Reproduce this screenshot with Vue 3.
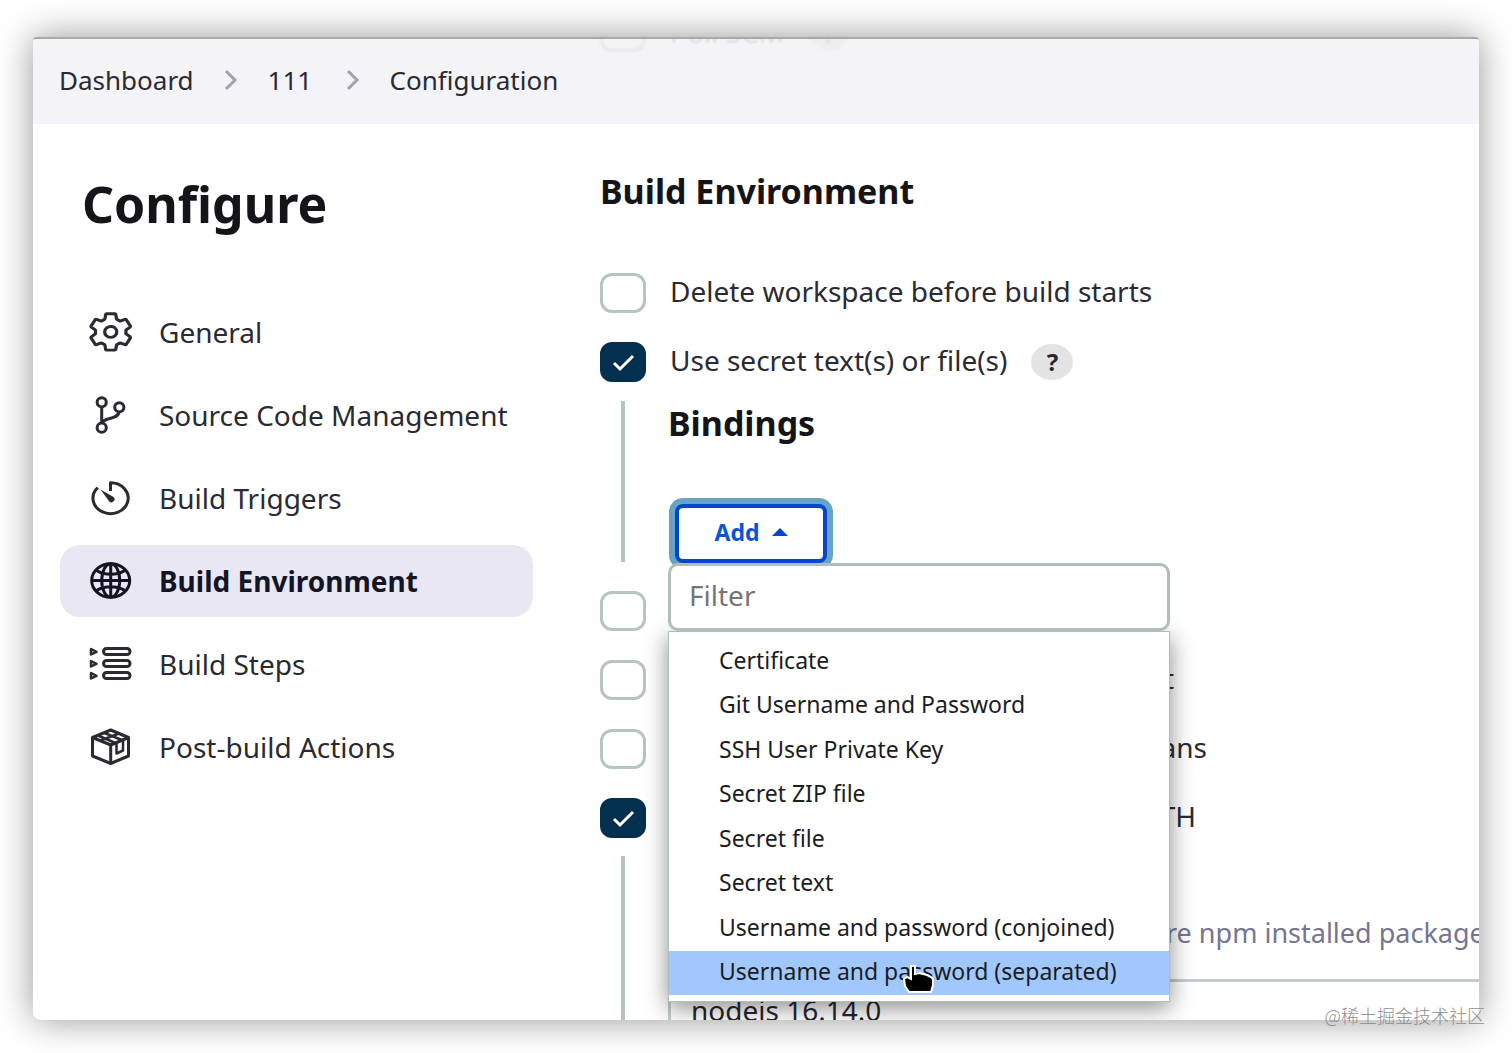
<script setup>
import { ref } from 'vue'

const filter = ref('')
const bindings = [
  'Certificate',
  'Git Username and Password',
  'SSH User Private Key',
  'Secret ZIP file',
  'Secret file',
  'Secret text',
  'Username and password (conjoined)',
  'Username and password (separated)',
]
const selected = 7

const sections = [
  { id: 'general', label: 'General' },
  { id: 'scm', label: 'Source Code Management' },
  { id: 'triggers', label: 'Build Triggers' },
  { id: 'environment', label: 'Build Environment' },
  { id: 'steps', label: 'Build Steps' },
  { id: 'post', label: 'Post-build Actions' },
]
const current = 'environment'

// The open menu covers these labels up to their last letters; width is the full label's extent.
const options = [
  { id: 'abort', label: '', width: 460, checked: false },
  { id: 'timestamps', label: 't', width: 504, checked: false },
  { id: 'inspect', label: 'ans', width: 537, checked: false },
  { id: 'node', label: 'TH', width: 526, checked: true },
]
</script>

<template>
  <div class="stage">
    <div class="window">
      <header class="topbar">
        <div class="ghost" aria-hidden="true">
          <span class="ghost-box"></span>
          <span>Poll SCM</span>
          <span class="ghost-help">?</span>
        </div>
        <nav class="crumbs" aria-label="Breadcrumb">
          <a href="#dashboard">Dashboard</a>
          <svg class="chevron" viewBox="0 0 14 22"><path d="M2 2l9 9-9 9" /></svg>
          <a href="#job">111</a>
          <svg class="chevron" viewBox="0 0 14 22"><path d="M2 2l9 9-9 9" /></svg>
          <a href="#configure">Configuration</a>
        </nav>
      </header>

      <div class="page">
        <aside class="sidebar">
          <h1>Configure</h1>
          <nav class="sections" aria-label="Sections">
            <a
              v-for="s in sections"
              :key="s.id"
              :href="'#' + s.id"
              class="section"
              :class="{ active: s.id === current }"
            >
              <svg v-if="s.id === 'general'" class="icon" viewBox="0 0 48 44">
                <g transform="translate(.4 .2) scale(.095 .085)">
                  <path stroke-width="34" d="M262.29 192.31a64 64 0 1057.4 57.4 64.13 64.13 0 00-57.4-57.4zM416.39 256a154.34 154.34 0 01-1.53 20.79l45.21 35.46a10.81 10.81 0 012.45 13.75l-42.77 74a10.81 10.81 0 01-13.14 4.59l-44.9-18.08a16.11 16.11 0 00-15.17 1.75A164.48 164.48 0 01325 400.8a15.94 15.94 0 00-8.82 12.14l-6.73 47.89a11.08 11.08 0 01-10.68 9.17h-85.54a11.11 11.11 0 01-10.69-8.87l-6.72-47.82a16.07 16.07 0 00-9-12.22 155.3 155.3 0 01-21.46-12.57 16 16 0 00-15.11-1.71l-44.89 18.07a10.81 10.81 0 01-13.14-4.58l-42.77-74a10.8 10.8 0 012.45-13.75l38.21-30a16.05 16.05 0 006-14.08c-.36-4.17-.58-8.33-.58-12.5s.21-8.27.58-12.35a16 16 0 00-6.07-13.94l-38.19-30A10.81 10.81 0 0149.48 186l42.77-74a10.81 10.81 0 0113.14-4.59l44.9 18.08a16.11 16.11 0 0015.17-1.75A164.48 164.48 0 01187 111.2a15.94 15.94 0 008.82-12.14l6.73-47.89A11.08 11.08 0 01213.23 42h85.54a11.11 11.11 0 0110.69 8.87l6.72 47.82a16.07 16.07 0 009 12.22 155.3 155.3 0 0121.46 12.57 16 16 0 0015.11 1.71l44.89-18.07a10.81 10.81 0 0113.14 4.58l42.77 74a10.8 10.8 0 01-2.45 13.75l-38.21 30a16.05 16.05 0 00-6.05 14.08c.33 4.14.55 8.3.55 12.47z" />
                </g>
              </svg>
              <svg v-else-if="s.id === 'scm'" class="icon" viewBox="0 0 48 44">
                <circle cx="15.7" cy="9.3" r="4.6" />
                <circle cx="33.3" cy="14.3" r="4.6" />
                <circle cx="15.7" cy="34.7" r="4.6" />
                <path d="M15.700 14v16M33 19c-1 8-15 5-17 11" />
              </svg>
              <svg v-else-if="s.id === 'triggers'" class="icon" viewBox="0 0 48 44">
                <path d="M24.500 15V6.800A17.600 15.400 0 1 1 11.800 11.600" />
                <path class="solid" d="M14.500 13.500l13 7.500a3 3 0 0 1-4.200 4.500z" />
              </svg>
              <svg v-else-if="s.id === 'environment'" class="icon" viewBox="0 0 48 44">
                <ellipse cx="24.7" cy="21.5" rx="19" ry="16.800" />
                <ellipse cx="24.7" cy="21.5" rx="9" ry="16.800" />
                <path d="M24.700 5v33M5.700 21.500h38M10.500 11.500c8 5 20.400 5 28.400 0M10.500 31.500c8-5 20.400-5 28.400 0" />
              </svg>
              <svg v-else-if="s.id === 'steps'" class="icon" viewBox="0 0 48 44">
                <g v-for="y in [0, 12, 24]" :key="y" :transform="`translate(0 ${y})`">
                  <rect x="17.5" y="6.5" width="26.5" height="6" rx="3" />
                  <path stroke-width="2.5" d="M5 7v5.500l5.500-2.700z" />
                </g>
              </svg>
              <svg v-else class="icon" viewBox="0 0 48 44">
                <path d="M24.700 5L42.500 12.500v18.500L24.700 38.500 6.500 31V12.500zM6.500 12.500l18.200 7.500 17.800-7.500M24.700 20v18.500" />
                <path stroke-width="2.5" d="M12 10.500l18.500 8v10l6.500-3V15.500L18.500 8M14.500 15.500L33 8.500" />
              </svg>
              <span>{{ s.label }}</span>
            </a>
          </nav>
        </aside>

        <main class="main">
          <h2>Build Environment</h2>

          <div class="option">
            <input id="delete" type="checkbox" />
            <label for="delete">Delete workspace before build starts</label>
          </div>
          <div class="option">
            <span class="tick">
              <input id="secret" type="checkbox" checked />
              <svg viewBox="0 0 46 40"><path d="M14 21l6 6 13-13" /></svg>
            </span>
            <label for="secret">Use secret text(s) or file(s)</label>
            <button class="help" type="button" aria-label="Help">?</button>
          </div>

          <section class="nested bindings">
            <h2>Bindings</h2>
            <div class="adder">
              <button class="add" type="button">
                Add
                <svg viewBox="0 0 16 8"><path d="M0 8l8-8 8 8z" /></svg>
              </button>
              <div class="dropdown">
                <input v-model="filter" class="filter" type="text" placeholder="Filter" aria-label="Filter" />
                <ul class="menu">
                  <li v-for="(b, i) in bindings" :key="b" :class="{ hovered: i === selected }">{{ b }}</li>
                </ul>
                <svg class="pointer" viewBox="0 0 32 30">
                  <path d="M8 2h4v8l4-1 4 1 4 1 4 2 2 2v6l-2 7H6L2 22 1 15l3-2 4 2z" />
                </svg>
              </div>
            </div>
          </section>

          <div v-for="o in options" :key="o.id" class="option">
            <span class="tick">
              <input :id="o.id" type="checkbox" :checked="o.checked" />
              <svg v-if="o.checked" viewBox="0 0 46 40"><path d="M14 21l6 6 13-13" /></svg>
            </span>
            <label :for="o.id" class="covered" :style="{ width: o.width + 'px' }">{{ o.label }}</label>
          </div>

          <section class="nested install">
            <p>re npm installed packages</p>
            <select aria-label="NodeJS installation">
              <option>nodejs 16.14.0</option>
            </select>
          </section>
        </main>
      </div>
    </div>
    <div class="watermark">@稀土掘金技术社区</div>
  </div>
</template>

<style>
body {
  margin: 0;
  background: #fff;
}
</style>

<style scoped>
* {
  box-sizing: border-box;
}
.stage {
  position: relative;
  display: flex;
  height: 100vh;
  padding: 37px 33px 33px;
  overflow: hidden;
  font-family: 'Noto Sans', 'Noto Sans CJK SC', sans-serif;
  font-size: 28px;
  line-height: 36px;
  color: #2a2a30;
}
.window {
  flex: 1;
  min-width: 0;
  overflow: hidden;
  background: #fff;
  border-top: 2px solid #a9a9a9;
  border-radius: 4px 4px 8px 8px;
  box-shadow: 0 0 36px rgba(0, 0, 0, 0.42);
}
a {
  color: inherit;
  text-decoration: none;
}
.topbar {
  position: relative;
  height: 85px;
  overflow: hidden;
  background: #f3f3f8;
}
.ghost {
  position: absolute;
  top: -27px;
  left: 567px;
  display: flex;
  align-items: center;
  gap: 24px;
  opacity: 0.12;
  filter: blur(1px);
}
.ghost-box {
  width: 46px;
  height: 40px;
  border: 3px solid #999;
  border-radius: 12px;
}
.ghost-help {
  width: 42px;
  border-radius: 50%;
  background: #ccc;
  text-align: center;
}
.crumbs {
  display: flex;
  align-items: center;
  gap: 30px;
  height: 81px;
  padding-left: 26px;
  font-size: 26px;
}
.crumbs a {
  min-width: 48px;
}
.chevron {
  width: 14px;
  height: 22px;
  fill: none;
  stroke: #a3a3ac;
  stroke-width: 3;
}
.page {
  display: flex;
  gap: 67px;
  padding-left: 27px;
}
.sidebar {
  flex: 0 0 473px;
}
h1,
h2 {
  margin: 0;
  color: #141419;
  font-weight: 700;
}
h1 {
  padding: 50px 0 62px 22px;
  font-size: 50px;
  line-height: 60px;
}
h2 {
  font-size: 34px;
  line-height: 40px;
}
.sections {
  display: flex;
  flex-direction: column;
  gap: 11px;
}
.section {
  display: flex;
  align-items: center;
  gap: 25px;
  height: 72px;
  padding-left: 26px;
  border-radius: 20px;
}
.section.active {
  background: #e8e7f2;
  color: #141425;
  font-weight: 700;
}
.icon {
  flex: none;
  width: 48px;
  height: 44px;
  fill: none;
  stroke: currentColor;
  stroke-width: 3;
  stroke-linejoin: round;
}
.icon .solid {
  fill: currentColor;
  stroke: none;
}
.main {
  flex: 1;
  min-width: 0;
  padding-top: 47px;
  white-space: nowrap;
}
.main > h2 {
  margin-bottom: 47px;
}
.option {
  display: flex;
  align-items: center;
  gap: 24px;
  height: 69px;
}
.option label {
  padding-bottom: 4px;
}
.covered {
  text-align: right;
}
.tick {
  display: grid;
}
.tick > * {
  grid-area: 1 / 1;
}
.tick svg {
  width: 46px;
  height: 40px;
  fill: none;
  stroke: #fff;
  stroke-width: 3;
  pointer-events: none;
}
input[type='checkbox'] {
  appearance: none;
  width: 46px;
  height: 40px;
  margin: 0;
  border: 3px solid #b7c4c3;
  border-radius: 12px;
  background: #fff;
}
input[type='checkbox']:checked {
  border-color: #03304f;
  background: #03304f;
}
.help {
  width: 42px;
  height: 36px;
  padding: 0;
  border: 0;
  border-radius: 50%;
  background: #e3e3e5;
  color: #26262c;
  font: 700 24px/36px 'Noto Sans', sans-serif;
}
.nested {
  margin-left: 21px;
  padding-left: 43px;
  border-left: 4px solid #b4c2c1;
}
.bindings {
  height: 161px;
  margin-top: 5px;
  margin-bottom: 14px;
}
.bindings h2 {
  padding-top: 2px;
}
.adder {
  position: relative;
  padding: 61px 0 0 7px;
}
.add {
  display: flex;
  align-items: center;
  justify-content: center;
  gap: 12px;
  width: 152px;
  height: 59px;
  padding: 0 0 4px;
  border: 4px solid #0047cc;
  border-radius: 8px;
  background: #fff;
  box-shadow: 0 0 0 6px #66a3c7;
  color: #0a54d6;
  font: 700 23px/32px 'Noto Sans', sans-serif;
}
.add svg {
  width: 16px;
  height: 8px;
  fill: #0047cc;
}
.dropdown {
  position: absolute;
  top: 120px;
  left: 0;
  width: 502px;
  color: #1c1c1f;
}
.filter {
  position: relative;
  display: block;
  width: 100%;
  height: 68px;
  padding: 0 18px 4px;
  border: 3px solid #b0bdbc;
  border-radius: 10px;
  background: #fff;
  font: 28px/36px 'Noto Sans', sans-serif;
}
.filter::placeholder {
  color: #757575;
}
.menu {
  display: grid;
  grid-auto-rows: 1fr;
  height: 371px;
  margin: 0;
  padding: 7px 0 6px;
  list-style: none;
  border: 1px solid #b0bdbc;
  background: #fff;
  box-shadow: 0 6px 22px rgba(0, 0, 0, 0.45);
  font-size: 23px;
}
.menu li {
  display: flex;
  align-items: center;
  padding: 0 0 3px 50px;
}
.menu .hovered {
  background: #a0c8ff;
}
.pointer {
  position: absolute;
  left: 235px;
  bottom: 8px;
  width: 32px;
  height: 30px;
  fill: #000;
  stroke: #fff;
  stroke-width: 2;
}
.install {
  margin-top: 4px;
}
.install p {
  margin: 0;
  padding: 59px 0 28px 498px;
  overflow: hidden;
  color: #757590;
  font-size: 27px;
}
.install select {
  appearance: none;
  display: block;
  width: 100%;
  height: 62px;
  padding: 0 20px;
  border: 3px solid #c3cdcd;
  border-right: 0;
  border-radius: 10px 0 0 10px;
  background: #fff;
  color: #26262c;
  font: 28px/36px 'Noto Sans', sans-serif;
}
.watermark {
  position: absolute;
  right: 27px;
  bottom: 20px;
  color: #8e8e8e;
  font: 300 18px/36px 'Noto Sans CJK SC', sans-serif;
}
</style>
